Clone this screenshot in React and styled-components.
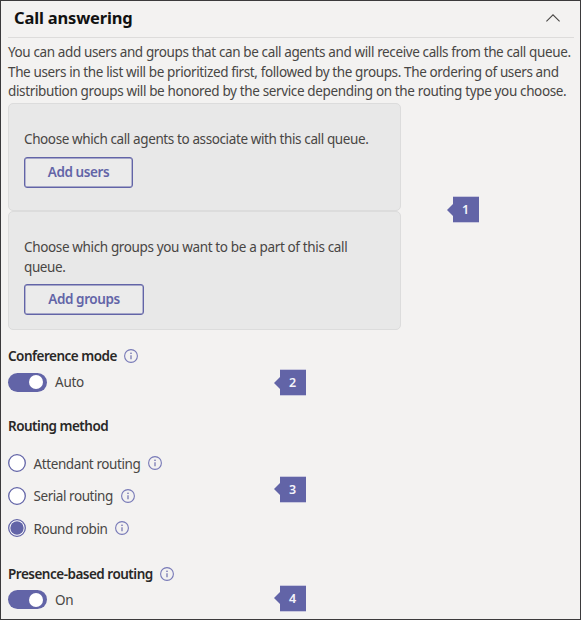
import React from "react";
import styled, { createGlobalStyle } from "styled-components";

const Global = createGlobalStyle`
  * { box-sizing: border-box; }
  body { margin: 0; background: #f3f2f1; font-family: "Noto Sans", "Open Sans", sans-serif; }
`;

const Panel = styled.main`
  width: 581px;
  height: 620px;
  overflow: hidden;
  border: 1px solid #3b3a3c;
  background: #f3f2f1;
  color: #484644;
  font-size: 13.5px;
`;

const Header = styled.header`
  display: flex;
  align-items: center;
  justify-content: space-between;
  height: 37px;
  margin: 0 6px 0 7px;
  padding: 0 14px 3px 6px;
  border-bottom: 1px solid #dddcdb;
`;

const Title = styled.h1`
  margin: 0;
  font-size: 16.5px;
  line-height: 24px;
  font-weight: 700;
  color: #111;
  letter-spacing: -0.17px;
`;

const Text = styled.span`
  display: block;
  white-space: nowrap;
  line-height: 19.5px;
  letter-spacing: ${(p) => p.$spacing ?? -0.39}px;
`;

const Intro = styled.div`
  height: 65px;
  padding: 5px 0 0 7px;
`;

const Body = styled.div`
  display: flex;
  align-items: center;
`;

const Cards = styled.div`
  width: 393px;
  margin-left: 7px;
`;

const Card = styled.section`
  height: ${(p) => p.$height}px;
  padding: 26px 15px 0;
  border: 1px solid #dcdcdc;
  border-radius: 5px;
  background: #e8e8e8;
`;

const OutlineButton = styled.button`
  display: block;
  width: ${(p) => p.$width}px;
  height: 31px;
  margin-top: 7px;
  padding: 0;
  border: 1px solid #6264a7;
  box-shadow: inset 0 0 0 0.4px #6264a7;
  border-radius: 3px;
  background: #ebebeb;
  color: #6264a7;
  font: 600 13.5px/29px "Noto Sans", "Open Sans", sans-serif;
  letter-spacing: -0.42px;
`;

const Marker = styled.div`
  display: flex;
  align-items: center;
  margin-left: ${(p) => p.$left}px;
  margin-top: ${(p) => p.$shift || 0}px;
  &::before {
    content: "";
    border: 6px solid transparent;
    border-left: 0;
    border-right-color: #6264a7;
  }
`;

const MarkerBox = styled.span`
  width: 26px;
  height: 27px;
  padding-right: 1px;
  border: solid #c9c8de;
  border-width: 1px 0;
  background: #6264a7;
  color: #f4f4fa;
  font-size: 12.5px;
  font-weight: 600;
  line-height: 25px;
  text-align: center;
`;

const Heading = styled.h2`
  display: flex;
  align-items: center;
  gap: 7px;
  height: 20px;
  margin: ${(p) => p.$top}px 0 0 7px;
  font-size: 13.5px;
  font-weight: 600;
  color: #292827;
`;

const Row = styled.div`
  display: flex;
  align-items: center;
  position: relative;
  height: ${(p) => p.$height}px;
  padding-left: 7px;
`;

const Label = styled(Text)`
  padding-top: 2px;
`;

const Pinned = styled.div`
  position: absolute;
  left: 273px;
  top: ${(p) => p.$top}px;
`;

const Toggle = styled.span`
  display: flex;
  justify-content: flex-end;
  align-items: center;
  width: 39px;
  height: 19px;
  margin-right: 8px;
  padding-right: 4px;
  border-radius: 10px;
  background: #6264a7;
  &::after {
    content: "";
    width: 14px;
    height: 14px;
    border-radius: 50%;
    background: #fff;
  }
`;

const RadioMark = styled.svg`
  flex: none;
  width: 18px;
  height: 18px;
  margin-right: 7.5px;
`;

const Radio = ({ checked }) => (
  <RadioMark viewBox="0 0 18 18">
    <circle cx="9" cy="9" r="8.3" fill="#fff" stroke="#6264a7" strokeWidth="1.3" />
    {checked && <circle cx="9" cy="9" r="6.7" fill="#6264a7" />}
  </RadioMark>
);

const Info = styled.svg`
  flex: none;
  width: 14px;
  height: 14px;
  margin-left: ${(p) => p.$gap || 0}px;
`;

const InfoIcon = ({ gap }) => (
  <Info viewBox="0 0 14 14" fill="none" $gap={gap}>
    <circle cx="7" cy="7" r="6.4" stroke="#7779b7" strokeWidth="1.1" />
    <circle cx="7" cy="4.2" r=".8" fill="#6264a7" />
    <path d="M7 6.2v4" stroke="#6264a7" strokeWidth="1.1" />
  </Info>
);

const Callout = ({ n, left, shift }) => (
  <Marker $left={left} $shift={shift}><MarkerBox>{n}</MarkerBox></Marker>
);

const options = [
  { label: "Attendant routing", spacing: -0.4 },
  { label: "Serial routing", spacing: -0.44 },
  { label: "Round robin", spacing: -0.44, checked: true },
];

export default function App() {
  return (
    <Panel>
      <Global />
      <Header>
        <Title>Call answering</Title>
        <svg width="14" height="8" viewBox="0 0 14 8" fill="none" aria-label="Collapse">
          <path d="M.4 7.4 7 .8l6.6 6.6" stroke="#484644" strokeWidth="1.1" />
        </svg>
      </Header>
      <Intro>
        <Text $spacing={-0.38}>You can add users and groups that can be call agents and will receive calls from the call queue.</Text>
        <Text $spacing={-0.38}>The users in the list will be prioritized first, followed by the groups. The ordering of users and</Text>
        <Text $spacing={-0.36}>distribution groups will be honored by the service depending on the routing type you choose.</Text>
      </Intro>
      <Body>
        <Cards>
          <Card $height={108}>
            <Text>Choose which call agents to associate with this call queue.</Text>
            <OutlineButton $width={109}>Add users</OutlineButton>
          </Card>
          <Card $height={119}>
            <Text $spacing={-0.36}>Choose which groups you want to be a part of this call</Text>
            <Text>queue.</Text>
            <OutlineButton $width={120}>Add groups</OutlineButton>
          </Card>
        </Cards>
        <Callout n={1} left={46} shift={-14} />
      </Body>
      <Heading $top={16}><Label $spacing={-0.5}>Conference mode</Label><InfoIcon /></Heading>
      <Row $height={32}>
        <Toggle /><Label $spacing={-0.25}>Auto</Label>
        <Pinned $top={3}><Callout n={2} /></Pinned>
      </Row>
      <Heading $top={18}><Label $spacing={-0.5}>Routing method</Label></Heading>
      <Row $height={11} />
      {options.map((o, i) => (
        <Row key={o.label} $height={32.5}>
          <Radio checked={o.checked} />
          <Label $spacing={o.spacing}>{o.label}</Label>
          <InfoIcon gap={8} />
          {i === 1 && <Pinned $top={-4}><Callout n={3} /></Pinned>}
        </Row>
      ))}
      <Heading $top={19}><Label $spacing={-0.5}>Presence-based routing</Label><InfoIcon /></Heading>
      <Row $height={32}>
        <Toggle /><Label $spacing={-0.2}>On</Label>
        <Pinned $top={1}><Callout n={4} /></Pinned>
      </Row>
    </Panel>
  );
}
